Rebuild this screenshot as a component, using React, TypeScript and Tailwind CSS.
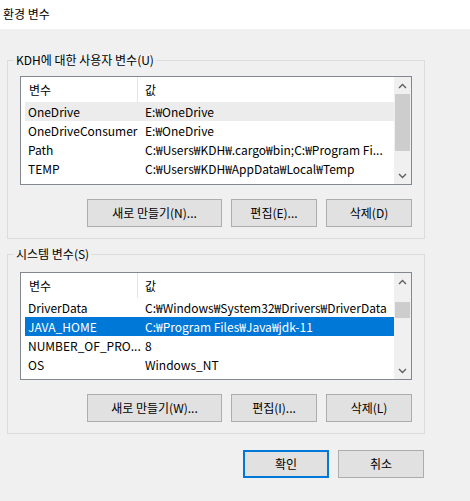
import React from "react";

type Row = { name: string; value: string };

const userVars: Row[] = [
  { name: "OneDrive", value: "E:₩OneDrive" },
  { name: "OneDriveConsumer", value: "E:₩OneDrive" },
  { name: "Path", value: "C:₩Users₩KDH₩.cargo₩bin;C:₩Program Fi..." },
  { name: "TEMP", value: "C:₩Users₩KDH₩AppData₩Local₩Temp" },
];

const systemVars: Row[] = [
  { name: "DriverData", value: "C:₩Windows₩System32₩Drivers₩DriverData" },
  { name: "JAVA_HOME", value: "C:₩Program Files₩Java₩jdk-11" },
  { name: "NUMBER_OF_PRO...", value: "8" },
  { name: "OS", value: "Windows_NT" },
];

function Chevron({ up }: { up?: boolean }) {
  return (
    <svg width="9" height="6" viewBox="0 0 9 6" fill="none">
      <path
        d={up ? "M1 5l3.5-3.5L8 5" : "M1 1l3.5 3.5L8 1"}
        stroke="#606060"
        strokeWidth={1.4}
      />
    </svg>
  );
}

function Scrollbar({ thumbTop, thumbHeight }: { thumbTop: string; thumbHeight: string }) {
  return (
    <div className="flex w-[17px] shrink-0 flex-col bg-[#f0f0f0]">
      <div className="flex h-[17px] items-center justify-center">
        <Chevron up />
      </div>
      <div className="flex-1 px-[1px]">
        <div className={`${thumbTop} ${thumbHeight} bg-[#cdcdcd]`} />
      </div>
      <div className="flex h-[17px] items-center justify-center">
        <Chevron />
      </div>
    </div>
  );
}

function ListView({
  rows,
  selected,
  active,
  height,
  thumbTop,
  thumbHeight,
}: {
  rows: Row[];
  selected: number;
  active?: boolean;
  height: string;
  thumbTop: string;
  thumbHeight: string;
}) {
  return (
    <div className={`flex ${height} w-[392px] overflow-hidden border border-[#828790] bg-white`}>
      <div className="min-w-0 flex-1 overflow-hidden">
        <div className="flex h-[25px] items-center">
          <div className="flex h-full w-[117px] items-center border-r border-[#e5e5e5] pl-[8px]">
            변수
          </div>
          <div className="pl-[7px]">값</div>
        </div>
        {rows.map((row, i) => {
          const isSel = i === selected;
          const sel = isSel ? (active ? "bg-[#0078d7] text-white" : "bg-[#ececec]") : "";
          return (
            <div key={row.name + i} className={`ml-[4px] flex h-[19px] items-center ${sel}`}>
              <div className="w-[120px] shrink-0 truncate pl-[3px]">{row.name}</div>
              <div className="min-w-0 flex-1 truncate whitespace-nowrap">{row.value}</div>
            </div>
          );
        })}
      </div>
      <Scrollbar thumbTop={thumbTop} thumbHeight={thumbHeight} />
    </div>
  );
}

function Button({ label, width, primary }: { label: string; width: string; primary?: boolean }) {
  return (
    <button
      className={`flex h-[28px] ${width} items-center justify-center bg-[#e1e1e1] ${
        primary ? "border-2 border-[#0078d7]" : "border border-[#adadad]"
      }`}
    >
      {label}
    </button>
  );
}

function Group({
  title,
  pt,
  children,
  buttons,
}: {
  title: string;
  pt: string;
  children: React.ReactNode;
  buttons: string[];
}) {
  return (
    <fieldset className="ml-[7px] w-[417px] border border-[#dcdcdc]">
      <legend className="ml-[6px] px-[2px] leading-[16px]">{title}</legend>
      <div className={`px-[12px] ${pt} pb-[11px]`}>
        {children}
        <div className="mt-[14px] flex justify-end gap-[9px]">
          <Button label={buttons[0]} width="w-[135px]" />
          <Button label={buttons[1]} width="w-[86px]" />
          <Button label={buttons[2]} width="w-[86px]" />
        </div>
      </div>
    </fieldset>
  );
}

export default function App() {
  return (
    <div className="h-[501px] w-[470px] overflow-hidden bg-[#f0f0f0] font-['Noto_Sans_CJK_KR',sans-serif] text-[12px] text-black">
      <div className="flex h-[29px] items-center bg-white pb-[1px] pl-[3px]">환경 변수</div>

      <div className="mt-[23px]">
        <Group title="KDH에 대한 사용자 변수(U)" pt="pt-[8px]" buttons={["새로 만들기(N)...", "편집(E)...", "삭제(D)"]}>
          <ListView
            rows={userVars}
            selected={0}
            height="h-[109px]"
            thumbTop="mt-0"
            thumbHeight="h-[57px]"
          />
        </Group>
      </div>

      <div className="mt-[7px]">
        <Group title="시스템 변수(S)" pt="pt-[10px]" buttons={["새로 만들기(W)...", "편집(I)...", "삭제(L)"]}>
          <ListView
            rows={systemVars}
            selected={1}
            active
            height="h-[108px]"
            thumbTop="mt-[12px]"
            thumbHeight="h-[16px]"
          />
        </Group>
      </div>

      <div className="mt-[16px] ml-[7px] flex w-[417px] justify-end gap-[9px]">
        <Button label="확인" width="w-[86px]" primary />
        <Button label="취소" width="w-[86px]" />
      </div>
    </div>
  );
}
